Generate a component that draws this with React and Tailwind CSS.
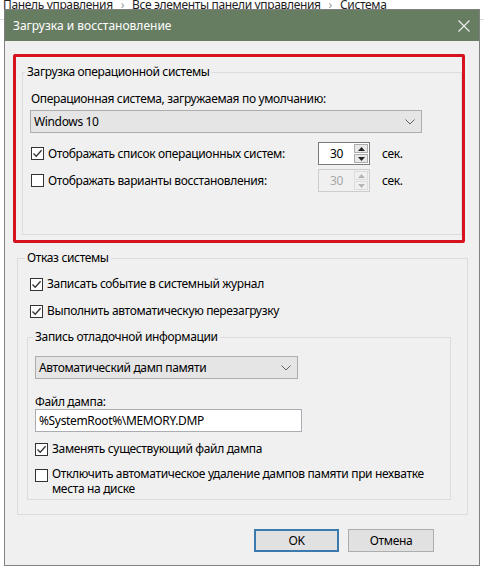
import React from 'react';

const font = "font-['Noto_Sans',sans-serif]";

function Check({ checked }) {
  return (
    <span className="w-[13px] h-[13px] border border-[#333] bg-white flex items-center justify-center shrink-0">
      {checked && (
        <svg width="11" height="11" viewBox="0 0 11 11" fill="none" stroke="#333" strokeWidth="1.3">
          <path d="M1.5 5.5 L4.2 8.3 L9.6 2.2" />
        </svg>
      )}
    </span>
  );
}

function Chevron() {
  return (
    <svg width="10" height="6" viewBox="0 0 10 6" fill="none" stroke="#606060" strokeWidth="1">
      <path d="M0.5 0.5 L5 5 L9.5 0.5" />
    </svg>
  );
}

function Select({ value, className }) {
  return (
    <div className={`h-[23px] flex items-center justify-between bg-[#e5e5e5] border border-[#adadad] pl-[3px] pr-[6px] ${className}`}>
      <span>{value}</span>
      <Chevron />
    </div>
  );
}

function Spin({ value, disabled }) {
  const tri = disabled ? '#b5b5b5' : '#222';
  return (
    <div className={`w-[52px] h-[23px] flex border ${disabled ? 'border-[#cccccc] bg-[#f0f0f0] text-[#a8a8a8]' : 'border-[#7a7a7a] bg-white'}`}>
      <span className="flex-1 pl-[11px] leading-[21px]">{value}</span>
      <div className="w-[16px] flex flex-col gap-[1px] p-[1px]">
        <div className={`flex-1 flex items-center justify-center border ${disabled ? 'border-[#dcdcdc] bg-[#f0f0f0]' : 'border-[#acacac] bg-[#e8e8e8]'}`}>
          <svg width="7" height="4" viewBox="0 0 7 4"><path d="M0 4 L3.5 0 L7 4 Z" fill={tri} /></svg>
        </div>
        <div className={`flex-1 flex items-center justify-center border ${disabled ? 'border-[#dcdcdc] bg-[#f0f0f0]' : 'border-[#acacac] bg-[#e8e8e8]'}`}>
          <svg width="7" height="4" viewBox="0 0 7 4"><path d="M0 0 L3.5 4 L7 0 Z" fill={tri} /></svg>
        </div>
      </div>
    </div>
  );
}

function CheckRow({ checked, label, className = '' }) {
  return (
    <div className={`h-[16px] flex items-center gap-[4px] ${className}`}>
      <Check checked={checked} />
      <span className="leading-[16px]">{label}</span>
    </div>
  );
}

export default function App() {
  return (
    <div className={`relative w-[484px] h-[570px] bg-white overflow-hidden text-[12px] text-black ${font}`}>
      {/* window behind */}
      <div className="-mt-[3px] pl-[3px] h-[16px] flex items-center text-[12px] tracking-[-0.35px] text-[#1e1e1e]">
        <span>Панель управления</span>
        <span className="text-[#999] mx-[8px]">›</span>
        <span>Все элементы панели управления</span>
        <span className="text-[#999] mx-[8px]">›</span>
        <span>Система</span>
      </div>
      <div className="mt-[6px] border-t border-[#dadada]" />

      <div className="absolute left-[4px] top-[9px] w-[476px] h-[557px] border border-[#808080] bg-[#f0f0f0] flex flex-col">
        <div className="h-[31px] shrink-0 bg-[#677d62] flex items-center justify-between pl-[8px] pr-[9px] text-white">
          <span>Загрузка и восстановление</span>
          <svg width="12" height="12" viewBox="0 0 12 12" stroke="#f2f2f2" strokeWidth="1.1">
            <path d="M0.5 0.5 L11.5 11.5 M11.5 0.5 L0.5 11.5" />
          </svg>
        </div>

        <div className="flex-1 flex flex-col pl-[8px] tracking-[-0.35px]">
          <div className="mt-[13px] w-[452px] h-[189px] border-[3px] border-[#d5121e] rounded-[2px]">
            <fieldset className="ml-[6px] mt-[7px] w-[440px] h-[171px] border border-[#dcdcdc]">
              <legend className="ml-[2px] px-[2px] leading-[16px]">Загрузка операционной системы</legend>
              <div className="pl-[8px] flex flex-col">
                <div className="mt-[11px] leading-[16px]">Операционная система, загружаемая по умолчанию:</div>
                <Select value="Windows 10" className="mt-[3px] -ml-[1px] w-[392px]" />
                <div className="mt-[9px] flex items-center">
                  <CheckRow checked label="Отображать список операционных систем:" className="w-[287px]" />
                  <Spin value="30" />
                  <span className="ml-[12px]">сек.</span>
                </div>
                <div className="mt-[4px] flex items-center">
                  <CheckRow label="Отображать варианты восстановления:" className="w-[287px]" />
                  <Spin value="30" disabled />
                  <span className="ml-[12px]">сек.</span>
                </div>
              </div>
            </fieldset>
          </div>

          <fieldset className="ml-[4px] mt-[7px] w-[451px] h-[265px] border border-[#dcdcdc]">
            <legend className="ml-[7px] px-[2px] leading-[16px]">Отказ системы</legend>
            <div className="pl-[9px] flex flex-col">
              <CheckRow checked label="Записать событие в системный журнал" className="mt-[10px] ml-[3px]" />
              <CheckRow checked label="Выполнить автоматическую перезагрузку" className="mt-[11px] ml-[3px]" />
              <fieldset className="mt-[10px] w-[424px] h-[171px] border border-[#dcdcdc]">
                <legend className="ml-[5px] px-[2px] leading-[16px]">Запись отладочной информации</legend>
                <div className="pl-[7px] flex flex-col">
                  <Select value="Автоматический дамп памяти" className="mt-[11px] w-[263px]" />
                  <div className="mt-[16px] leading-[14px]">Файл дампа:</div>
                  <div className="w-[267px] h-[23px] bg-white border border-[#abadb3] pl-[3px] leading-[21px]">%SystemRoot%\MEMORY.DMP</div>
                  <CheckRow checked label="Заменять существующий файл дампа" className="mt-[9px]" />
                  <div className="mt-[9px] flex items-start gap-[4px]">
                    <span className="mt-[3px]"><Check /></span>
                    <span className="leading-[15px] w-[385px]">Отключить автоматическое удаление дампов памяти при нехватке места на диске</span>
                  </div>
                </div>
              </fieldset>
            </div>
          </fieldset>

          <div className="mt-[14px] flex justify-end gap-[9px] pr-[45px]">
            <button className="w-[85px] h-[23px] bg-[#e1e1e1] border-2 border-[#3a7aae] leading-[19px]">OK</button>
            <button className="w-[86px] h-[23px] bg-[#e1e1e1] border border-[#adadad] leading-[21px]">Отмена</button>
          </div>
        </div>
      </div>
    </div>
  );
}
